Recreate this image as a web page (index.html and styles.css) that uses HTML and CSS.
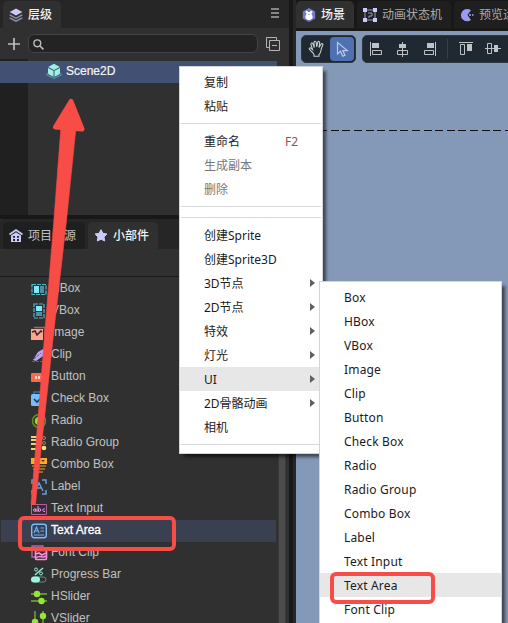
FILE: index.html
```html
<!DOCTYPE html>
<html lang="zh-CN">
<head>
<meta charset="utf-8">
<title>Scene editor</title>
<link rel="stylesheet" href="styles.css">
</head>
<body>
<div class="app">
  <div class="dock">
    <section class="hierarchy">
      <div class="tabs">
        <div class="tab active t-level">
          <svg width="14" height="14" viewBox="0 0 14 14"><path d="M7 0.5 13.3 4 7 7.6 0.7 4z" fill="#c9ccfa"/><path d="M0.7 6.8 7 10.3l6.3-3.5M0.7 9.8 7 13.2l6.3-3.4" fill="none" stroke="#8d92b4" stroke-width="1.4"/></svg>
          <span>层级</span>
        </div>
        <svg class="burger" width="8" height="10" viewBox="0 0 8 10"><path d="M0 1h8M0 5h8M0 9h8" stroke="#a6a6a6" stroke-width="1.5"/></svg>
      </div>
      <div class="search-bar">
        <svg width="12" height="12" viewBox="0 0 12 12"><path d="M6 0v12M0 6h12" stroke="#bdbdbd" stroke-width="1.7"/></svg>
        <div class="search"><svg width="11" height="11" viewBox="0 0 11 11"><circle cx="4.3" cy="4.3" r="3.4" fill="none" stroke="#bdbdbd" stroke-width="1.4"/><path d="M6.8 6.8l3.6 3.6" stroke="#bdbdbd" stroke-width="1.6"/></svg></div>
        <svg width="14" height="14" viewBox="0 0 14 14"><path d="M3 10.5H.5V.5h10V3M3.5 3.5h10v10h-10zM6 8.5h5" fill="none" stroke="#b5b5b5"/></svg>
      </div>
      <div class="tree">
        <div class="tree-row">
          <svg width="16" height="16" viewBox="0 0 16 16"><path d="M8 .8 13.8 4 8 7 2.2 4zM2 5l5.5 2.8v6L2 10.9zM14 5 8.5 7.8v6l5.5-2.9z" fill="#9ff0e3"/><path d="M2 9.8.7 12 7.8 15.2 15.3 12 14 9.8" fill="none" stroke="#4f8c9b" stroke-width="1.3"/></svg>
          <span>Scene2D</span>
        </div>
      </div>
    </section>
    <section class="widgets">
      <div class="tabs">
        <div class="tab t-assets">
          <svg width="14" height="13" viewBox="0 0 14 13"><path d="M.5 5.5 7 1l6.5 4.500" fill="none" stroke="#c9ccfa" stroke-width="1.7"/><path d="M2 6.500 7 3.300l5 3.200V13H2z" fill="#c9ccfa"/><path d="M4 7h2v1.700H4zM8 7h2v1.700H8zM4 10h2v2H4zM8 10h2v2H8z" fill="#252533"/></svg>
          <span>项目资源</span>
        </div>
        <div class="tab active t-widget">
          <svg width="14" height="13" viewBox="0 0 14 13"><path d="M7 .7 8.900 4.300l4.100.7-3 2.900.7 4.100L7 10.200 3.300 12 4 7.900 1 5l4.100-.7z" fill="#c9ccfa" stroke="#c9ccfa" stroke-linejoin="round"/></svg>
          <span>小部件</span>
        </div>
      </div>
      <div class="filter"></div>
      <div class="list-wrap">
        <ul class="list">
          <li><svg viewBox="0 0 16 16"><rect x="1" y="3.500" width="14" height="10" fill="none" stroke="#4fb6ca" stroke-width="1.200" stroke-dasharray="4 1"/><path d="M3 5h5v7H3z" fill="#83e6fa"/><path d="M9 5h4v7H9z" fill="#4b93a3"/></svg>HBox</li>
          <li><svg viewBox="0 0 16 16"><rect x="3" y="1" width="10" height="14" fill="none" stroke="#4fb6ca" stroke-width="1.200" stroke-dasharray="4 1"/><path d="M5 3h6v5H5z" fill="#83e6fa"/><path d="M5 9h6v4H5z" fill="#4b93a3"/></svg>VBox</li>
          <li><svg viewBox="0 0 16 16"><path d="M3 2.500h11V12" fill="none" stroke="#a66457" stroke-width="1.500"/><path d="M0 4h12v11H0z" fill="#ffa58f"/><path d="m1 7 3-1 2 4 4-4 1 1" fill="none" stroke="#3b292b" stroke-width="1.600"/></svg>Image</li>
          <li><svg viewBox="0 0 16 16"><path d="M2 13 7 5 14 1l-2 8-7 5z" fill="#b9a6f5"/><path d="m3 12 7-6M1 14.500h12" stroke="#61558c" stroke-dasharray="3 1"/></svg>Clip</li>
          <li><svg viewBox="0 0 16 16"><rect y="4" width="16" height="9" rx="1" fill="#ff6849"/><path d="M4 7h2v3H4zM7 7h2v3H7zM10 7h2v3h-2z" fill="#ffd8d1"/></svg>Button</li>
          <li><svg viewBox="0 0 16 16"><path d="M3 3V1h11v10h-2" fill="none" stroke="#416d9a" stroke-width="1.500"/><rect y="3" width="12" height="12" rx="1.500" fill="#76bdff"/><path d="m3 8 3 3 4-4" fill="none" stroke="#293747" stroke-width="1.600"/></svg>Check Box</li>
          <li><svg viewBox="0 0 16 16"><circle cx="8" cy="8" r="6.500" fill="none" stroke="#618f25" stroke-width="1.500"/><circle cx="8" cy="8" r="4.300" fill="#8fdd32"/></svg>Radio</li>
          <li><svg viewBox="0 0 16 16"><path d="M0 2h9M0 5h9M0 9h9M0 14h9" stroke="#efd07b" stroke-width="2"/><circle cx="13" cy="3" r="1.500" fill="none" stroke="#9f8957"/><circle cx="13" cy="8" r="1.500" fill="none" stroke="#9f8957"/><circle cx="13" cy="13" r="2.300" fill="#ffdc7e"/></svg>Radio Group</li>
          <li><svg viewBox="0 0 16 16"><path d="M0 1h16v6H0z" fill="#ffac24"/><path d="M10 3h4l-2 2z" fill="#503b20"/><path d="M1 9h14M2 12h12M5 15h7" stroke="#b57d25" stroke-width="1.700"/></svg>Combo Box</li>
          <li><svg viewBox="0 0 16 16"><path d="M1 5V1h4M11 1h4v4M1 11v4h4M11 15h4v-4M4 12 8 4l4 8M6 9h4" fill="none" stroke="#639edb" stroke-width="1.500"/></svg>Label</li>
          <li><svg viewBox="0 0 16 16"><path d="M.5 3.500h15v10H.5z" fill="none" stroke="#ae61a1"/><circle cx="3.700" cy="9" r="1.200" fill="none" stroke="#ff91e8"/><path d="M5 7.500V11M7 5v6" stroke="#ff91e8"/><circle cx="8.500" cy="9" r="1.300" fill="none" stroke="#ff91e8"/><path d="M14 8c-3-1-3 3 0 2.500" fill="none" stroke="#ff91e8"/></svg>Text Input</li>
          <li class="selected"><svg viewBox="0 0 16 16"><rect x=".7" y="1.200" width="14.600" height="13.600" rx="2.500" fill="none" stroke="#77bcff" stroke-width="1.400"/><path d="m3 10 2.500-6L8 10M4 8h3M9.500 5h3.500M9.500 8h3.500M3 12h10" fill="none" stroke="#6fadeb" stroke-width="1.200"/></svg>Text Area</li>
          <li><svg viewBox="0 0 16 16"><path d="M4 12H1V1h11v3" fill="none" stroke="#b961a9" stroke-width="1.400"/><rect x="4.500" y="5.500" width="11" height="9" rx="1" fill="none" stroke="#ff8ddf" stroke-width="1.600"/><path d="m5 9 3-1 3 2 4-2M5 13c4-4 6 1 10-2" fill="none" stroke="#ff8ddf" stroke-width="1.600"/></svg>Font Clip</li>
          <li><svg viewBox="0 0 16 16"><path d="m4 8 8-7" stroke="#96ecd6" stroke-width="1.500"/><circle cx="5" cy="2.500" r="1.500" fill="none" stroke="#96ecd6"/><circle cx="10" cy="6.500" r="1.500" fill="none" stroke="#96ecd6"/><rect x="1" y="10" width="14" height="5" rx="2.500" fill="none" stroke="#5d9186"/><rect y="9.500" width="9" height="6" rx="3" fill="#9df5df"/></svg>Progress Bar</li>
          <li><svg viewBox="0 0 16 16"><path d="M0 5h16M0 12h16" stroke="#669037" stroke-width="1.800"/><circle cx="6" cy="5" r="3.200" fill="#94e536"/><circle cx="10.500" cy="12" r="3.200" fill="#94e536"/></svg>HSlider</li>
          <li><svg viewBox="0 0 16 16"><path d="M4 0v16M12 0v16" stroke="#669037" stroke-width="1.800"/><circle cx="4" cy="11" r="3.200" fill="#94e536"/><circle cx="12" cy="5" r="3.200" fill="#94e536"/></svg>VSlider</li>
        </ul>
        <div class="scroll"></div>
      </div>
    </section>
  </div>
  <div class="splitter"></div>
  <main class="scene">
    <div class="scene-tabs">
      <div class="tab active s-one"><svg width="14" height="14" viewBox="0 0 14 14"><path d="M7 0 13.200 3.500v7L7 14 .8 10.500v-7z" fill="#737cc5"/><circle cx="4.700" cy="4" r="1.200" fill="#fff"/><circle cx="9.300" cy="4" r="1.200" fill="#fff"/><path d="M5 4h4l1 3c2 3-1 5-3 5s-5-2-3-5z" fill="#fff"/><path d="M6 6h2L7 7z" fill="#6b68a5"/></svg><span>场景</span></div>
      <div class="tab s-two"><svg width="14" height="14" viewBox="0 0 14 14"><path d="M2 2h10v10H2zM5 5h4v3H6v2" fill="none" stroke="#989dc4"/><path d="M0 0h4v4H0zM10 0h4v4h-4zM0 10h4v4H0zM10 10h4v4h-4z" fill="#c9ccfa"/></svg><span>动画状态机</span></div>
      <div class="tab s-three"><svg width="14" height="14" viewBox="0 0 14 14"><path d="M11 2.300A6.200 6.200 0 1 0 11 12L7.500 7z" fill="#979cf1"/><path d="M9 6h2v2H9zM12 6h1.500v2H12z" fill="#8186c8"/></svg><span>预览运行</span></div>
    </div>
    <div class="canvas">
      <div class="tool-row">
        <div class="tool-group modes">
          <svg width="17" height="18" viewBox="0 0 17 18"><path d="M5 13 1.700 9.700C.5 8.500 2 7.300 3.200 8.300L4.500 9.500 3 4.500c-.4-1.600 1.500-2 2-.5L6.300 7.500 6 2.500c0-1.700 2-1.700 2.200 0L8.700 7l1-4.700c.4-1.500 2.200-1 2 .4L11 7.500l2-3.200c.9-1.300 2.400-.4 1.800.8-1 2-1.500 3.500-1.800 5.400-.3 2-1 3-2 4v1.700H6V14.500z" fill="none" stroke="#c7cacd" stroke-width="1.100"/></svg>
          <div class="pointer"><svg width="13" height="17" viewBox="0 0 13 17"><path d="M1.500 1.500v11.500l3-2.700 2.200 5 2.300-1-2.200-4.700h4.500z" fill="none" stroke="#bbcae9" stroke-width="1.200"/></svg></div>
        </div>
        <div class="tool-group align">
          <svg width="140" height="16" viewBox="0 0 140 16"><g fill="none" stroke="#c0c3c6"><path d="M.5 1v14M2.500 9.500h9v4h-9zM32.500 1v15M27.500 9.500h10v4h-10zM65.500 1v14M54.500 9.500h9v4h-9zM89 1.500h14M90.500 3.500h4v10h-4zM115 7.500h16M117.500 2.500h4v10h-4z"/></g><path d="M2 2h7v5H2zM29 3h7v4h-7zM57 2h7v5h-7zM97 3h5v7h-5zM124 4h4v7h-4z" fill="#c0c3c6"/><path d="M77.500-2v20" stroke="#35404a"/></svg>
        </div>
      </div>
      <div class="guide"></div>
    </div>
  </main>
</div>

<svg class="arrow" width="60" height="410" viewBox="28 97 60 410"><path d="M71 100.500 82.800 129.700 75.800 129.500 66 225 54 330 41 450 35.500 504.500H31L35.500 450 45 330 53.500 225 60.800 129 54.700 128z" fill="#f84c47" stroke="#f84c47" stroke-width="0.600"/><path d="M71 101.500 82 129 55.500 127z" fill="#f84c47" stroke="#f84c47" stroke-width="5" stroke-linejoin="round"/></svg>
<div class="mark mark-list"></div>

<div class="menu main-menu">
  <div class="item">复制</div>
  <div class="item">粘贴</div>
  <hr>
  <div class="item">重命名<span class="key">F2</span></div>
  <div class="item off">生成副本</div>
  <div class="item off">删除</div>
  <hr>
  <hr>
  <div class="item">创建Sprite</div>
  <div class="item">创建Sprite3D</div>
  <div class="item more">3D节点</div>
  <div class="item more">2D节点</div>
  <div class="item more">特效</div>
  <div class="item more">灯光</div>
  <div class="item more hover">UI</div>
  <div class="item more">2D骨骼动画</div>
  <div class="item">相机</div>
  <hr>
</div>
<div class="menu sub-menu">
  <div class="item">Box</div>
  <div class="item">HBox</div>
  <div class="item">VBox</div>
  <div class="item">Image</div>
  <div class="item">Clip</div>
  <div class="item">Button</div>
  <div class="item">Check Box</div>
  <div class="item">Radio</div>
  <div class="item">Radio Group</div>
  <div class="item">Combo Box</div>
  <div class="item">Label</div>
  <div class="item">Text Input</div>
  <div class="item hover">Text Area</div>
  <div class="item">Font Clip</div>
</div>
<div class="mark mark-menu"></div>
</body>
</html>
```
FILE: styles.css
```css
* { box-sizing: border-box; }
html, body { height: 100%; }
body {
  margin: 0;
  overflow: hidden;
  position: relative;
  background: #181818;
  color: #c0c0c0;
  font: 12px/22px "Liberation Sans", "Noto Sans CJK SC", sans-serif;
}
svg { display: block; flex: none; overflow: visible; }
.app { display: flex; height: 623px; }
.dock { width: 289px; flex: none; display: flex; flex-direction: column; gap: 4px; }
.hierarchy { height: 215px; background: #303030; }
.widgets { flex: 1; background: #303030; display: flex; flex-direction: column; min-height: 0; }
.tabs { display: flex; align-items: flex-end; gap: 3px; background: #262626; padding: 0 10px 0 3px; }
.hierarchy .tabs { height: 28px; }
.widgets .tabs { height: 30px; flex: none; border-radius: 4px 4px 0 0; }
.tab {
  display: flex;
  align-items: center;
  gap: 5px;
  height: 27px;
  padding-left: 6px;
  background: #1f1f1f;
  border-radius: 5px 5px 0 0;
  white-space: nowrap;
  overflow: hidden;
}
.tab.active { background: #303030; color: #f2f2f2; font-weight: 500; }
.t-level { width: 58px; }
.t-assets { width: 82px; }
.t-widget { width: 70px; }
.burger { margin: 0 0 10px auto; }
.search-bar { display: flex; align-items: center; height: 31px; padding: 0 9px 0 8px; gap: 8px; }
.search {
  width: 230px;
  height: 19px;
  border: 1px solid #444;
  border-radius: 6px;
  background: #232323;
  padding: 4px 0 0 4px;
}
.tree { height: 156px; padding-top: 2px; background: linear-gradient(to right, #202020 28px, #303030 28px); }
.tree-row {
  display: flex;
  align-items: center;
  gap: 4px;
  width: 277px;
  height: 22px;
  padding: 0 0 2px 46px;
  background: #415073;
  color: #f5f5f5;
  -webkit-text-stroke: .2px #f5f5f5;
}
.filter { height: 28px; flex: none; border-bottom: 1px solid #1b1b1b; }
.list-wrap { display: flex; flex: 1; min-height: 0; padding-top: 1px; }
.list { width: 275px; margin: 0 2px 0 1px; padding: 0; list-style: none; overflow: hidden; }
.list li { display: flex; align-items: center; gap: 4px; height: 22px; padding: 0 0 2px 30px; }
.list svg { width: 16px; height: 16px; margin-top: 2px; }
.list .selected { background: #3a4050; color: #fff; -webkit-text-stroke: .3px #fff; }
.scroll { width: 8px; background: #4c4c4c; border: solid #393939; border-width: 0 1px; }
.splitter { width: 4px; flex: none; background: #181818; }
.scene { flex: 1; min-width: 0; display: flex; flex-direction: column; background: #262626; padding-left: 3px; }
.scene-tabs { display: flex; gap: 3px; height: 31px; padding-top: 1px; background: #181818; overflow: hidden; }
.scene-tabs .tab { flex: none; color: #aaa; }
.scene-tabs .active { color: #f2f2f2; }
.s-one { width: 58px; }
.s-two { width: 94px; }
.s-three { width: 94px; }
.canvas { flex: 1; background: #8499b7; padding-top: 4px; }
.tool-row { display: flex; gap: 6px; padding-left: 5px; height: 28px; }
.tool-group { display: flex; align-items: center; background: #202831; border: 1px solid #2e3843; border-radius: 5px; }
.modes { width: 55px; flex: none; padding: 0 1px 0 6px; justify-content: space-between; }
.pointer { display: flex; align-items: center; justify-content: center; width: 24px; height: 24px; border-radius: 4px; background: #5170b1; }
.align { width: 160px; flex: none; padding-left: 7px; }
.guide { height: 1px; margin-top: 67px; background: repeating-linear-gradient(to right, #111 0 8px, transparent 8px 11.6px); }

.menu {
  position: absolute;
  display: flex;
  flex-direction: column;
  background: #fff;
  border: 1px solid #d2d5da;
  padding: 3px 0;
  color: #1b1b1b;
  font: 12px/24px "Noto Sans", "Noto Sans CJK SC", sans-serif;
  box-shadow: 4px 4px 3px -1px rgba(0, 0, 0, .55);
}
.main-menu { left: 179px; top: 66px; width: 144px; height: 388px; }
.sub-menu { left: 319px; top: 281px; width: 183px; height: 360px; }
.item { display: flex; flex: none; align-items: center; height: 24px; padding: 2px 0 0 24px; white-space: nowrap; }
.sub-menu .item { letter-spacing: .17px; }
.item.off { color: #777; }
.item.hover { background: #e7e7e7; }
.item.more::after {
  content: "";
  margin: -2px 7px 0 auto;
  border: solid transparent;
  border-width: 4px 0 4px 5px;
  border-left-color: #606060;
}
.key { margin: 0 24px 0 auto; color: #8b5750; }
.menu hr { flex: none; height: 1px; margin: 5px 1px; border: 0; background: #d7d9da; }
.arrow { position: absolute; left: 28px; top: 97px; }
.mark { position: absolute; border: 4px solid #f84c47; border-radius: 6px; }
.mark-list { left: 18px; top: 516px; width: 158px; height: 35px; }
.mark-menu { left: 330px; top: 572px; width: 105px; height: 32px; }
```
